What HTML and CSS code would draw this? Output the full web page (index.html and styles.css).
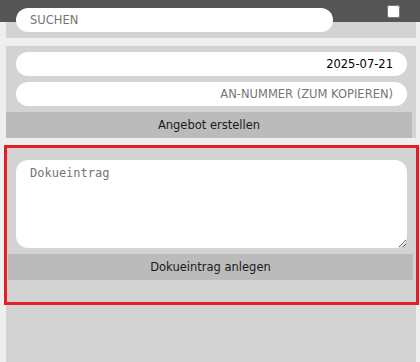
FILE: index.html
```html
<!DOCTYPE html>
<html lang="de">
<head>
<meta charset="utf-8">
<title>Angebot</title>
<link rel="stylesheet" href="styles.css">
</head>
<body>
<header class="topbar">
  <input class="pill search" type="text" placeholder="SUCHEN">
  <input class="toggle" type="checkbox">
</header>
<main class="column">
  <div class="strip"></div>
  <section class="panel offer">
    <input class="pill right value" type="text" value="2025-07-21">
    <input class="pill right" type="text" placeholder="AN-NUMMER (ZUM KOPIEREN)">
    <button class="action">Angebot erstellen</button>
  </section>
  <section class="panel doc">
    <textarea class="note" placeholder="Dokueintrag"></textarea>
    <button class="action">Dokueintrag anlegen</button>
  </section>
  <div class="filler"></div>
</main>
</body>
</html>
```
FILE: styles.css
```css
html, body {
  margin: 0;
  height: 100%;
}
body {
  background: #efefef;
  font-family: "DejaVu Sans", Verdana, sans-serif;
  font-size: 11.5px;
  display: flex;
  flex-direction: column;
  overflow: hidden;
}
.topbar {
  position: relative;
  z-index: 1;
  height: 22px;
  flex: none;
  background: #555555;
  display: flex;
  align-items: flex-start;
  padding-left: 16px;
}
.pill {
  box-sizing: border-box;
  height: 24px;
  border: none;
  outline: none;
  border-radius: 12px;
  background: #ffffff;
  padding: 0 14px;
  font-family: "DejaVu Sans", Verdana, sans-serif;
  font-size: 11.5px;
  color: #000;
  margin: 0;
}
.pill::placeholder {
  color: #757575;
}
.search {
  margin-top: 8px;
  width: 317px;
}
.toggle {
  margin: 5px 20px 0 auto;
  width: 13px;
  height: 13px;
}
.column {
  flex: 1;
  width: 410px;
  margin-left: 6px;
  display: flex;
  flex-direction: column;
}
.strip {
  height: 16px;
  background: #d3d3d3;
  margin-bottom: 8px;
}
.panel {
  background: #d3d3d3;
  display: flex;
  flex-direction: column;
}
.offer {
  padding-top: 6px;
  margin-bottom: 7px;
}
.offer .pill {
  margin: 0 9px 6px 10px;
}
.right {
  text-align: right;
}
.action {
  height: 26px;
  border: none;
  margin: 0;
  padding: 0;
  background: #bbbbbb;
  color: #1a1a1a;
  font-family: "DejaVu Sans", Verdana, sans-serif;
  font-size: 11.5px;
  text-align: center;
}
.offer .action {
  width: 406px;
}
.doc {
  border: 3px solid #e31e24;
  margin: 0 -3px 0 -2px;
  padding: 12px 0 22px;
}
.note {
  box-sizing: border-box;
  margin: 0 9px 6px 9px;
  height: 88px;
  border: none;
  outline: none;
  border-radius: 12px;
  background: #ffffff;
  padding: 6px 14px;
  font-family: "DejaVu Sans Mono", monospace;
  font-size: 12px;
  resize: vertical;
}
.note::placeholder {
  color: #757575;
}
.doc .action {
  width: 405px;
  margin-left: 1px;
}
.filler {
  flex: 1;
  background: #d3d3d3;
}
```
